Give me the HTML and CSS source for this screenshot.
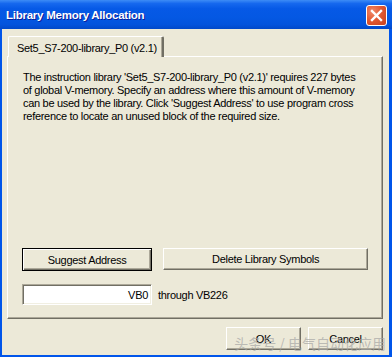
FILE: index.html
```html
<!DOCTYPE html>
<html lang="en">
<head>
    <meta charset="UTF-8">
    <title>Library Memory Allocation</title>
    <link rel="stylesheet" href="styles.css">
</head>
<body>
    <div class="window">
        <div class="titlebar">
            <span class="title">Library Memory Allocation</span>
            <div class="close">
                <svg width="13" height="13" viewBox="0 0 13 13">
                    <path d="M2 2 L11 11 M11 2 L2 11" stroke="#fff" stroke-width="2.4" stroke-linecap="square"/>
                </svg>
            </div>
        </div>
        <div class="client">
            <div class="tabs">
                <div class="tab">Set5_S7-200-library_P0 (v2.1)</div>
            </div>
            <div class="panel">
                <p class="info">The instruction library 'Set5_S7-200-library_P0 (v2.1)' requires 227 bytes of global V-memory. Specify an address where this amount of V-memory can be used by the library. Click 'Suggest Address' to use program cross reference to locate an unused block of the required size.</p>
                <div class="controls">
                    <div class="row">
                        <button class="btn btn-default suggest">Suggest Address</button>
                        <button class="btn delete">Delete Library Symbols</button>
                    </div>
                    <div class="row address">
                        <div class="field">VB0</div>
                        <span class="through">through VB226</span>
                    </div>
                </div>
            </div>
            <div class="footer">
                <button class="btn dlg">OK</button>
                <button class="btn dlg">Cancel</button>
            </div>
            <div class="watermark">头条号 / 电气自动化应用</div>
        </div>
    </div>
</body>
</html>
```

FILE: styles.css
```css
body {
    margin: 0;
    font-family: 'Liberation Sans', Arial, sans-serif;
    font-size: 11px;
    letter-spacing: -0.3px;
    color: #000;
}

.window {
    width: 392px;
    height: 357px;
    box-sizing: border-box;
    display: flex;
    flex-direction: column;
    background-color: #0055EA;
    overflow: hidden;
}

.titlebar {
    height: 29px;
    flex: none;
    display: flex;
    align-items: center;
    justify-content: space-between;
    padding: 0 5px 0 6px;
    background: linear-gradient(#3D8CF6 0%, #1668EE 12%, #0659E6 30%, #0458E3 60%, #0353DC 85%, #0148C8 100%);
}

.title {
    color: #fff;
    font-family: 'Liberation Sans', Arial, sans-serif;
    font-weight: bold;
    font-size: 11.5px;
    letter-spacing: -0.25px;
    text-shadow: 1px 1px 0 #0A1E9A;
    margin-top: 1px;
}

.close {
    width: 19px;
    height: 19px;
    border: 1px solid #fff;
    border-radius: 3px;
    display: flex;
    align-items: center;
    justify-content: center;
    background: radial-gradient(circle at 30% 30%, #F08A6A 0%, #E35A33 45%, #C8401C 100%);
    margin-top: 2px;
}

.client {
    flex: 1;
    position: relative;
    margin: 0 3px 2px 2px;
    background-color: #ECE9D8;
    padding: 7px 6px 0 5px;
    display: flex;
    flex-direction: column;
}

.tabs {
    display: flex;
    padding-left: 1px;
    height: 20px;
    position: relative;
    z-index: 1;
}

.tab {
    width: 156px;
    box-sizing: border-box;
    height: 21px;
    padding: 5px 0 0 8px;
    white-space: nowrap;
    background-color: #ECE9D8;
    border-top: 1px solid #fff;
    border-left: 1px solid #fff;
    border-right: 2px solid #716F64;
    border-radius: 2px 2px 0 0;
    box-shadow: inset -1px 0 0 #ACA899;
}

.panel {
    height: 263px;
    box-sizing: border-box;
    border-top: 1px solid #fff;
    border-left: 1px solid #fff;
    border-right: 1px solid #716F64;
    border-bottom: 1px solid #716F64;
    box-shadow: inset -1px -1px 0 #ACA899;
    padding: 14px 14px 13px 14px;
    display: flex;
    flex-direction: column;
}

.info {
    margin: 0;
    padding-left: 1px;
    line-height: 13px;
    width: 338px;
}

.controls {
    margin-top: auto;
    display: flex;
    flex-direction: column;
    gap: 13px;
}

.row {
    display: flex;
    gap: 11px;
}

.btn {
    font-family: 'Liberation Sans', Arial, sans-serif;
    font-size: 11px;
    letter-spacing: -0.3px;
    color: #000;
    height: 23px;
    box-sizing: border-box;
    background-color: #ECE9D8;
    border-top: 1px solid #fff;
    border-left: 1px solid #fff;
    border-right: 1px solid #716F64;
    border-bottom: 1px solid #716F64;
    box-shadow: inset -1px -1px 0 #ACA899;
    padding: 0;
}

.btn-default {
    border: 1px solid #000;
    box-shadow: inset 1px 1px 0 #fff, inset -1px -1px 0 #716F64, inset -2px -2px 0 #ACA899;
}

.suggest {
    width: 131px;
}

.delete {
    width: 206px;
    height: 22px;
}

.address {
    align-items: center;
    gap: 6px;
}

.field {
    width: 130px;
    height: 21px;
    box-sizing: border-box;
    background-color: #fff;
    border-top: 1px solid #ACA899;
    border-left: 1px solid #ACA899;
    border-right: 1px solid #fff;
    border-bottom: 1px solid #fff;
    box-shadow: inset 1px 1px 0 #716F64, inset -1px -1px 0 #F1EFE2;
    text-align: right;
    padding: 4px 3px 0 0;
}

.footer {
    display: flex;
    justify-content: flex-end;
    gap: 7px;
    margin-top: 8px;
}

.dlg {
    width: 75px;
}

.watermark {
    position: absolute;
    right: 3px;
    bottom: 4px;
    font-family: 'Noto Sans CJK SC', sans-serif;
    font-size: 14px;
    line-height: 16px;
    letter-spacing: 0;
    color: rgba(165, 165, 165, 0.7);
    white-space: nowrap;
}
```
